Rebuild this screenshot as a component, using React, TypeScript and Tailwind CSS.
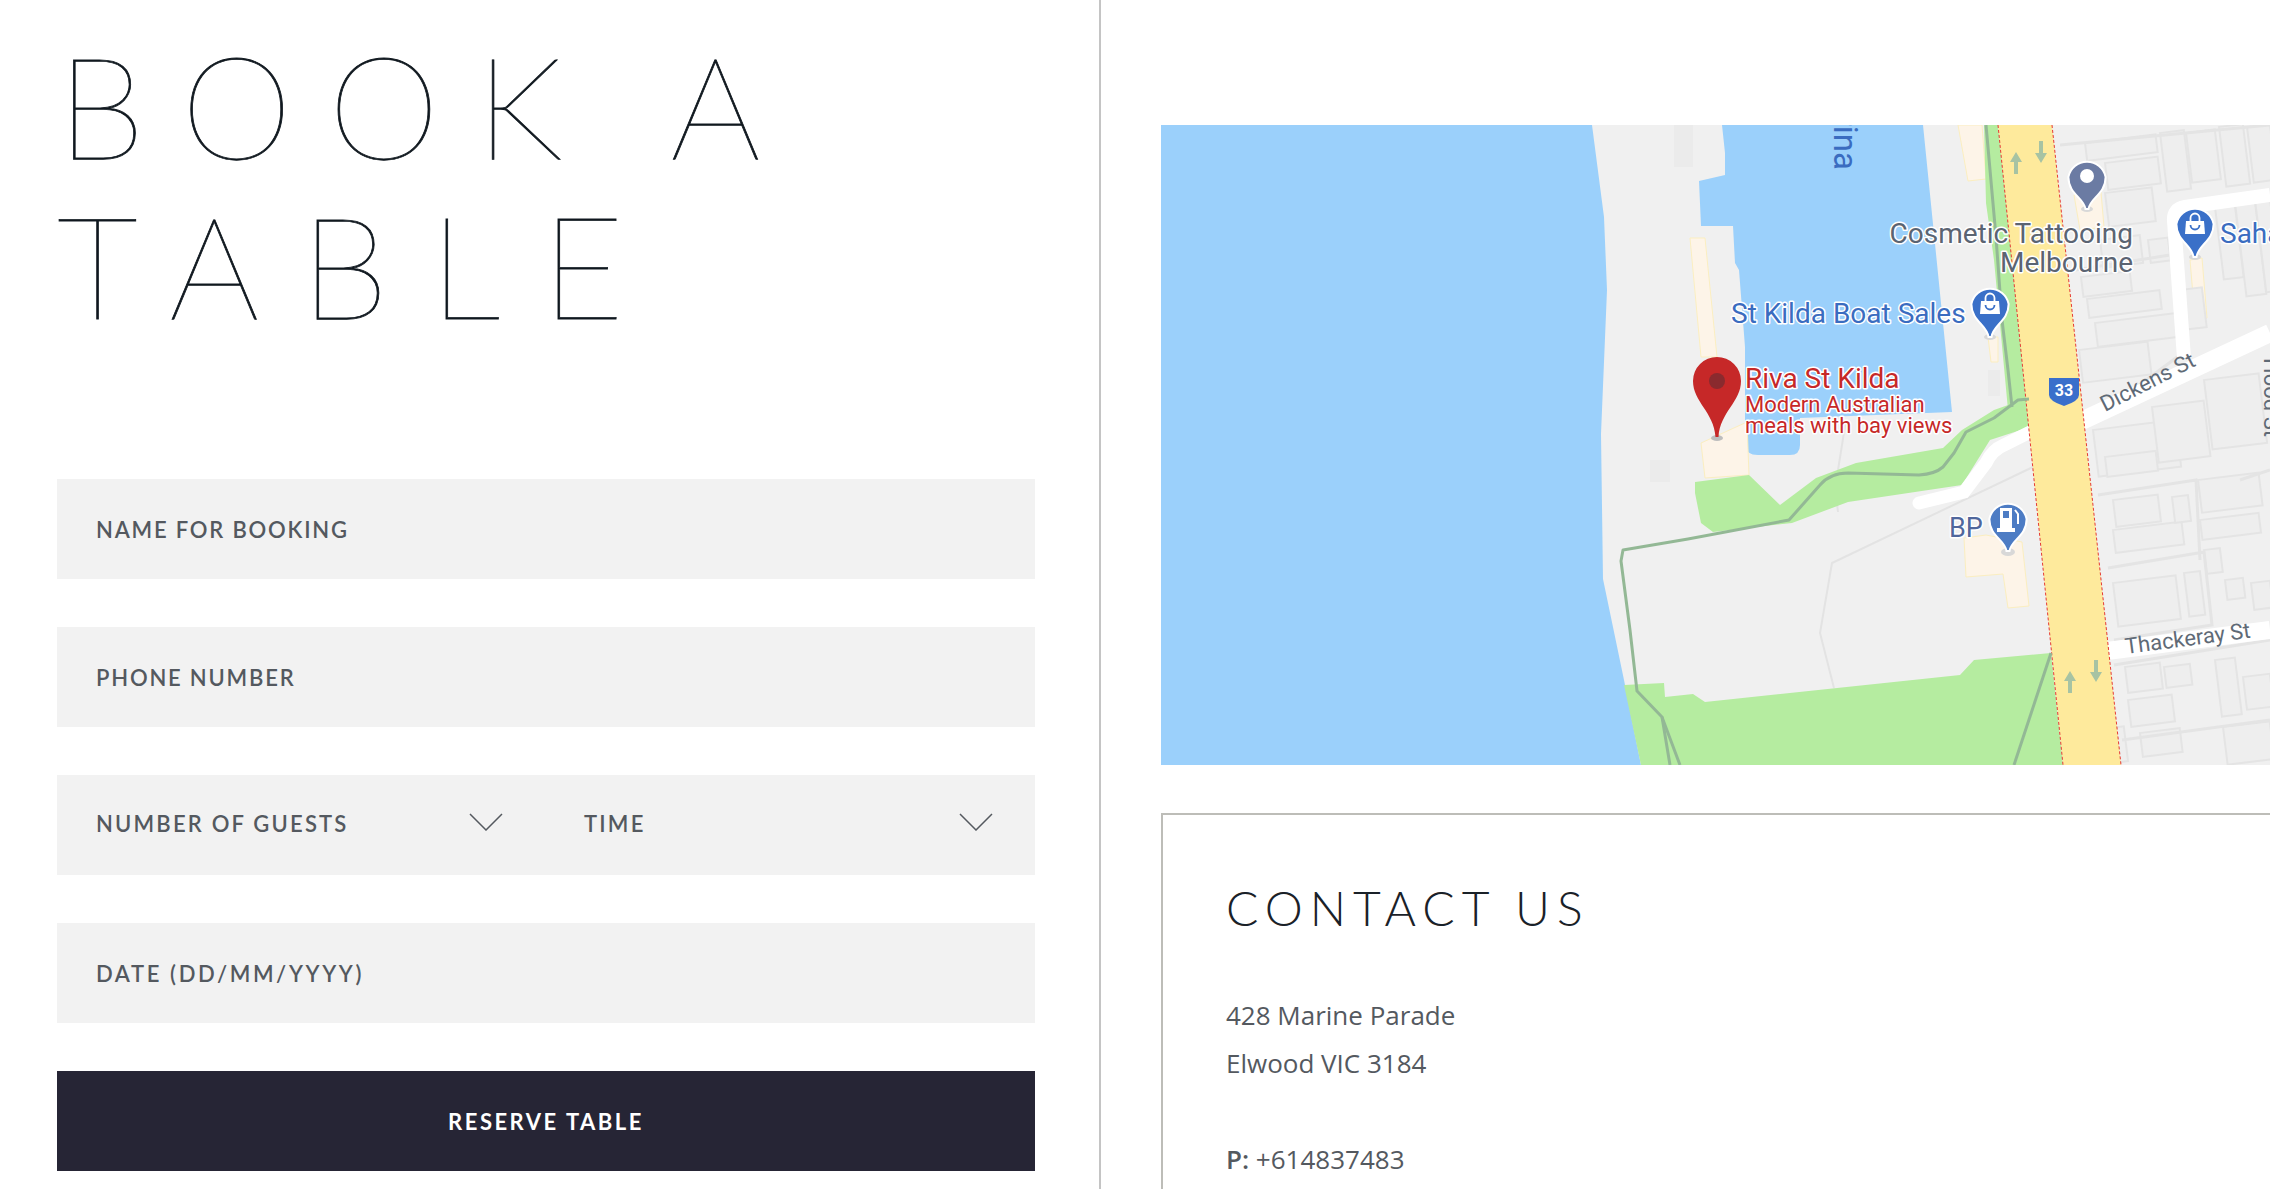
const blocks: [number, number, number, number][] = [
  [2105, 163, 53, 27], [2160, 133, 24, 59], [2186, 133, 29, 50], [2219, 127, 24, 60], [2247, 127, 23, 56],
  [2085, 143, 71, 18], [2105, 193, 47, 34], [2148, 240, 20, 23], [2081, 277, 49, 20], [2087, 299, 73, 19],
  [2095, 323, 81, 24], [2079, 350, 69, 33], [2215, 207, 20, 73], [2235, 203, 20, 94], [2255, 200, 15, 93],
  [2093, 430, 83, 47], [2204, 380, 55, 70], [2152, 407, 52, 56], [2105, 457, 51, 20], [2113, 500, 45, 27],
  [2113, 530, 69, 23], [2172, 497, 16, 26], [2198, 480, 61, 33], [2200, 520, 59, 20], [2113, 583, 63, 44],
  [2184, 573, 16, 44], [2204, 550, 16, 24], [2225, 580, 18, 20], [2251, 583, 19, 27], [2125, 667, 35, 26],
  [2164, 667, 26, 21], [2215, 660, 20, 57], [2128, 700, 44, 27], [2243, 677, 27, 33], [2140, 733, 40, 24],
  [2223, 727, 47, 38], [2100, 240, 40, 28], [2180, 290, 22, 40], [2080, 600, 22, 40], [2094, 730, 30, 35],
];

const beige = [
  "1690,238 1705,238 1717,357 1701,357",
  "1701,443 1747,422 1749,475 1705,478",
  "1958,125 1982,125 1986,179 1968,181",
  "1988,337 1998,337 1998,362 1991,362",
  "2074,195 2101,192 2104,227 2080,230",
  "2190,260 2202,258 2207,318 2195,319",
  "1964,538 1986,535 2022,542 2029,606 2008,608 2003,574 1966,577",
];

const halo = { paintOrder: "stroke", stroke: "#fff", strokeWidth: 3, strokeLinejoin: "round" } as const;

function Pin({ x, y, r, tip, fill }: { x: number; y: number; r: number; tip: number; fill: string }) {
  const side = r * 0.98;
  return (
    <path
      d={`M${x - 1.5} ${tip} C${x - 3} ${y + r * 1.1} ${x - side} ${y + r * 0.9} ${x - side} ${y} A${r} ${r} 0 0 1 ${x + side} ${y} C${x + side} ${y + r * 0.9} ${x + 3} ${y + r * 1.1} ${x + 1.5} ${tip} Z`}
      fill={fill}
      stroke="#fff"
      strokeWidth="2"
    />
  );
}

function ShopIcon({ x, y }: { x: number; y: number }) {
  return (
    <g>
      <path d={`M${x - 9} ${y - 3}H${x + 9}L${x + 10} ${y + 10}H${x - 10}Z`} fill="#fff" />
      <path d={`M${x - 4.5} ${y - 3}V${y - 6}A4.5 4.5 0 0 1 ${x + 4.5} ${y - 6}V${y - 3}`} fill="none" stroke="#fff" strokeWidth="1.8" />
      <path d={`M${x - 4.5} ${y + 1}A4.5 4.5 0 0 0 ${x + 4.5} ${y + 1}`} fill="none" stroke="#3a70c8" strokeWidth="1.8" />
    </g>
  );
}

function Arrow({ x, y, up }: { x: number; y: number; up: boolean }) {
  return (
    <path
      d={up ? `M${x} ${y}l-6 10h4v12h4v-12h4Z` : `M${x} ${y + 22}l-6 -10h4v-12h4v12h4Z`}
      fill="#a7c3a3"
    />
  );
}

function MapView() {
  return (
    <svg viewBox="1161 125 1109 640" className="block h-[640px] w-[1109px]" style={{ fontFamily: "Roboto, sans-serif" }}>
      <rect x="1161" y="125" width="1109" height="640" fill="#9bd0fb" />
      <path d="M1592 125L1604 217L1607 290L1601 434L1603 579L1624 680L1641 765H2270V125Z" fill="#f0f0f0" />

      {/* marina */}
      <path
        d="M1722 125L1725 153L1725 175L1699 181L1701 226L1733 226L1735 263L1739 270L1745 347L1745 445Q1746 455 1758 455H1790Q1800 455 1800 445V418L1952 412L1923 125Z"
        fill="#9bd0fb"
      />

      {beige.map((points) => (
        <polygon key={points} points={points} fill="#fdf4e8" stroke="#fbeec0" strokeWidth="1" />
      ))}
      <rect x="1674" y="125" width="19" height="42" fill="#ebebeb" />
      <rect x="1650" y="460" width="20" height="22" fill="#ebebeb" />
      <rect x="1988" y="370" width="12" height="26" fill="#ebebeb" />

      {/* park paths */}
      <g fill="none" stroke="#e3e3e3" strokeWidth="2">
        <path d="M2033 467L1832 563L1820 633L1834 688" />
        <path d="M1838 512L1836 495" />
        <path d="M1846 420L1838 470" />
      </g>

      {/* parks */}
      <path d="M1695 482L1749 475L1780 505L1816 478L1856 463L1943 448L1962 430L1994 410L2028 398L2030 427L1990 440L1962 485L1848 502L1792 523L1713 532L1701 523L1695 493Z" fill="#b5eca0" />
      <path d="M1624 685L1664 683L1665 697L1693 694L1705 702L1960 675L1974 660L2051 653L2063 765H1641Z" fill="#b5eca0" />
      <path d="M1984 125H1998L2030 420L2008 410L1994 260L1986 203Z" fill="#b5eca0" />

      {/* blocks east of the highway */}
      <g fill="#eeeeee" stroke="#e4e4e4" strokeWidth="2">
        {blocks.map(([x, y, w, h]) => (
          <rect key={`${x}-${y}`} x={x} y={y} width={w} height={h} transform={`rotate(-7 ${x} ${y})`} />
        ))}
      </g>
      <g fill="none" stroke="#e4e4e4" strokeWidth="3">
        <path d="M2060 145L2270 125" />
        <path d="M2075 270L2170 255" />
        <path d="M2085 425L2180 355" />
        <path d="M2098 495L2196 480L2200 560" />
        <path d="M2108 568L2204 552L2212 625L2114 640" />
        <path d="M2114 665L2270 640" />
        <path d="M2122 740L2270 720" />
        <path d="M2240 480L2270 470" />
      </g>

      {/* streets */}
      <g fill="none" stroke="#fff" strokeLinecap="butt">
        <path d="M2270 195L2185 207Q2173 209 2174 221L2184 358" strokeWidth="14" />
        <path d="M2075 424L2270 333" strokeWidth="18" />
        <path d="M2107 651L2270 630" strokeWidth="18" />
        <path d="M1919 503L1964 492L1986 463Q1992 450 2004 445L2034 430" strokeWidth="13" strokeLinecap="round" />
      </g>

      {/* highway */}
      <polygon points="1998,125 2052,125 2121,765 2063,765" fill="#feea9c" />
      <g stroke="#e53935" strokeWidth="1" strokeDasharray="3 2">
        <line x1="1998" y1="125" x2="2063" y2="765" />
        <line x1="2052" y1="125" x2="2121" y2="765" />
      </g>

      {/* trails */}
      <g fill="none" stroke="#93b895" strokeWidth="3" strokeLinejoin="round">
        <path d="M1670 765L1662 717L1637 691L1630 630L1621 561L1623 550L1688 539L1789 520L1820 485Q1830 473 1848 473L1919 475Q1935 474 1943 467L1954 453L1966 432L1994 418L2018 400L2029 399" />
        <path d="M1680 765L1662 717" />
        <path d="M1986 125L1996 237L2002 320L2008 370L2012 407" />
        <path d="M2051 653L2014 765" />
      </g>

      <Arrow x={2016} y={152} up />
      <Arrow x={2041} y={141} up={false} />
      <Arrow x={2070} y={671} up />
      <Arrow x={2096} y={660} up={false} />

      {/* route shield */}
      <path d="M2049 378H2079V395Q2079 401 2064 406Q2049 401 2049 395Z" fill="#3a6fcb" />
      <text x="2064" y="396" textAnchor="middle" fontSize="16" fontWeight="700" fill="#fff">33</text>

      {/* pins */}
      <ellipse cx="2087" cy="209" rx="6" ry="3" fill="#d8d8d8" />
      <Pin x={2087} y={177} r={19} tip={209} fill="#6b7ba3" />
      <circle cx="2087" cy="176" r="7" fill="#fff" />

      <ellipse cx="2195" cy="257" rx="6" ry="3" fill="#d8d8d8" />
      <Pin x={2195} y={224} r={19} tip={257} fill="#3a70c8" />
      <ShopIcon x={2195} y={224} />

      <ellipse cx="1990" cy="337" rx="6" ry="3" fill="#d8d8d8" />
      <Pin x={1990} y={304} r={19} tip={337} fill="#3a70c8" />
      <ShopIcon x={1990} y={304} />

      <ellipse cx="2008" cy="552" rx="7" ry="4" fill="#d8d8d8" />
      <Pin x={2008} y={519} r={19} tip={551} fill="#4d7cc4" />
      <path d="M2000 508H2012V528H2015V532H1997V528H2000Z" fill="#fff" />
      <path d="M2015 510L2018 514V524" fill="none" stroke="#fff" strokeWidth="2" />
      <rect x="2003" y="511" width="6" height="7" fill="#4d7cc4" />

      <ellipse cx="1717" cy="438" rx="6" ry="3" fill="#bdbdbd" />
      <path d="M1715.5 437C1714 412 1693 402 1693 381A24 24 0 0 1 1741 381C1741 402 1720 412 1718.5 437Z" fill="#c62828" />
      <circle cx="1717" cy="381" r="8" fill="#8a2a2e" />

      {/* labels */}
      <g fontSize="28" fill="#5b6472" style={halo}>
        <text x="2133" y="243" textAnchor="end">Cosmetic Tattooing</text>
        <text x="2133" y="272" textAnchor="end">Melbourne</text>
      </g>
      <g fontSize="28" fill="#3a6cc0" style={halo}>
        <text x="1731" y="323">St Kilda Boat Sales</text>
        <text x="2220" y="243">Sahara</text>
      </g>
      <text x="1834" y="170" fontSize="33" fill="#3a6cc0" textAnchor="end" transform="rotate(90 1834 170)">Marina</text>
      <text x="1949" y="537" fontSize="27" fill="#50679c" style={halo}>BP</text>
      <g fill="#c62828" style={halo}>
        <text x="1745" y="388" fontSize="28">Riva St Kilda</text>
        <text x="1745" y="412" fontSize="22">Modern Australian</text>
        <text x="1745" y="433" fontSize="22">meals with bay views</text>
      </g>
      <g fontSize="22" fill="#5f6a76">
        <text x="2105" y="412" transform="rotate(-27 2105 412)">Dickens St</text>
        <text x="2126" y="654" transform="rotate(-7.5 2126 654)">Thackeray St</text>
        <text x="2264" y="358" transform="rotate(90 2264 358)">Hood St</text>
      </g>
    </svg>
  );
}

function Chevron() {
  return (
    <svg viewBox="0 0 34 18" className="h-[18px] w-[34px] -translate-y-[2px] text-[#54595f]" fill="none" stroke="currentColor" strokeWidth="1.5">
      <path d="M1 1L17 17L33 1" />
    </svg>
  );
}

function Field({ label, wide }: { label: string; wide?: boolean }) {
  return (
    <div className={`flex h-[100px] items-center bg-[#f2f2f2] pl-[39px] text-[22px] font-semibold uppercase text-[#54595f] ${wide ? "tracking-[2.6px]" : "tracking-[1.8px]"}`}>
      {label}
    </div>
  );
}

export default function App() {
  return (
    <div className="flex h-[1189px] w-[2270px] overflow-hidden bg-white font-['Lato',sans-serif]">
      <div className="w-[1101px] shrink-0 border-r-2 border-[#c4c4c4] pl-[57px] pt-[24px]">
        <h1 className="text-[142px] font-thin leading-[160px] tracking-[36px] text-[#10181f] [-webkit-text-stroke:0.8px_#10181f]">
          BOOK A<br />
          <span className="tracking-[41px]">TABLE</span>
        </h1>

        <form className="mt-[135px] flex w-[978px] flex-col gap-[48px]">
          <Field label="Name for booking" />
          <Field label="Phone number" />
          <div className="flex h-[100px] bg-[#f2f2f2] pb-[3px] text-[22px] font-semibold uppercase tracking-[2.2px] text-[#54595f]">
            <div className="flex w-[527px] items-center justify-between pl-[39px] pr-[81px]">
              <span>Number of guests</span>
              <Chevron />
            </div>
            <div className="flex flex-1 items-center justify-between pr-[42px]">
              <span>Time</span>
              <Chevron />
            </div>
          </div>
          <Field label="Date (DD/MM/YYYY)" wide />
          <button
            type="button"
            className="h-[100px] bg-[#262535] text-[22px] font-bold uppercase tracking-[2.5px] text-white"
          >
            Reserve table
          </button>
        </form>
      </div>

      <div className="min-w-0 flex-1 pl-[60px] pt-[125px]">
        <MapView />
        <section className="mt-[48px] h-[500px] w-[1200px] border-2 border-[#bdbdb8] pl-[63px] pt-[64px]">
          <h2 className="text-[48px] font-light leading-[58px] tracking-[7px] text-[#1a2128]">CONTACT US</h2>
          <div className="mt-[54px] font-['Open_Sans',sans-serif] text-[26px] leading-[48px] text-[#54595f]">
            <p>428 Marine Parade</p>
            <p>Elwood VIC 3184</p>
            <p className="mt-[48px]">
              <strong className="font-semibold">P:</strong> +614837483
            </p>
          </div>
        </section>
      </div>
    </div>
  );
}
